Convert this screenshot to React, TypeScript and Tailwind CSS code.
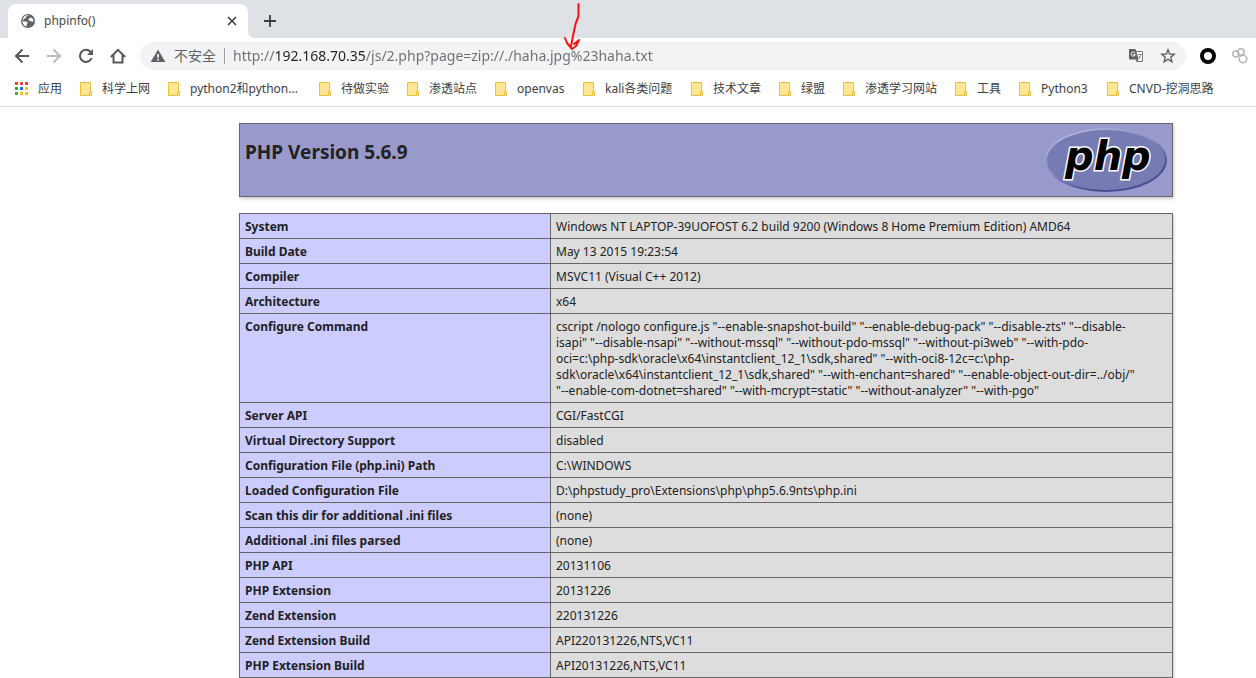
import React, { useState } from "react";

type Bookmark = {
  label: string;
  width: string;
};

const BOOKMARKS: Bookmark[] = [
  { label: "科学上网", width: "w-12" },
  { label: "python2和python...", width: "w-[111px]" },
  { label: "待做实验", width: "w-12" },
  { label: "渗透站点", width: "w-12" },
  { label: "openvas", width: "w-12" },
  { label: "kali各类问题", width: "w-[68px]" },
  { label: "技术文章", width: "w-12" },
  { label: "绿盟", width: "w-6" },
  { label: "渗透学习网站", width: "w-[72px]" },
  { label: "工具", width: "w-6" },
  { label: "Python3", width: "w-12" },
  { label: "CNVD-挖洞思路", width: "w-[90px]" },
];

const CONFIGURE_COMMAND = [
  'cscript /nologo configure.js "--enable-snapshot-build" "--enable-debug-pack" "--disable-zts" "--disable-',
  'isapi" "--disable-nsapi" "--without-mssql" "--without-pdo-mssql" "--without-pi3web" "--with-pdo-',
  'oci=c:\\php-sdk\\oracle\\x64\\instantclient_12_1\\sdk,shared" "--with-oci8-12c=c:\\php-',
  'sdk\\oracle\\x64\\instantclient_12_1\\sdk,shared" "--with-enchant=shared" "--enable-object-out-dir=../obj/"',
  '"--enable-com-dotnet=shared" "--with-mcrypt=static" "--without-analyzer" "--with-pgo"',
].join("\n");

const INFO: [string, string][] = [
  ["System", "Windows NT LAPTOP-39UOFOST 6.2 build 9200 (Windows 8 Home Premium Edition) AMD64"],
  ["Build Date", "May 13 2015 19:23:54"],
  ["Compiler", "MSVC11 (Visual C++ 2012)"],
  ["Architecture", "x64"],
  ["Configure Command", CONFIGURE_COMMAND],
  ["Server API", "CGI/FastCGI"],
  ["Virtual Directory Support", "disabled"],
  ["Configuration File (php.ini) Path", "C:\\WINDOWS"],
  ["Loaded Configuration File", "D:\\phpstudy_pro\\Extensions\\php\\php5.6.9nts\\php.ini"],
  ["Scan this dir for additional .ini files", "(none)"],
  ["Additional .ini files parsed", "(none)"],
  ["PHP API", "20131106"],
  ["PHP Extension", "20131226"],
  ["Zend Extension", "220131226"],
  ["Zend Extension Build", "API220131226,NTS,VC11"],
  ["PHP Extension Build", "API20131226,NTS,VC11"],
];

const APP_DOTS = [
  "#ea4335", "#ea4335", "#ea4335",
  "#34a853", "#1a73e8", "#fbbc04",
  "#34a853", "#fbbc04", "#fbbc04",
];

function GlobeIcon() {
  return (
    <svg viewBox="0 0 16 16" className="h-4 w-4">
      <circle cx="8" cy="8" r="7" fill="#5f6368" />
      <path
        d="M8.8 2.4 6.2 3.6 5.6 5 3.4 6.6 2.6 8.6 5 8.4 7 8.8 7.8 10 6.8 11 6.6 13.4A5.6 5.6 0 0 1 2.4 8L2.6 6.6A5.6 5.6 0 0 1 8.8 2.4ZM9 5.4 11 4.4 12.4 5.2A5.4 5.4 0 0 1 13.4 8.8L11.2 8.6 9.6 7.4 8 7.2Z"
        fill="#fff"
      />
    </svg>
  );
}

function FolderIcon() {
  return (
    <svg viewBox="0 0 16 16" className="h-4 w-4 shrink-0">
      <path d="M.5 1.5h10v8.5h1v4.5H.5z" fill="#ffe694" stroke="#e8c13f" />
      <path d="M9.5 14.5v-3.5l1-1" fill="none" stroke="#e8c13f" />
    </svg>
  );
}

function TranslateIcon() {
  return (
    <svg viewBox="0 0 16 16" className="h-4 w-4">
      <path d="M7 3.5h7.5v10H9" fill="#fff" stroke="#777b7f" />
      <path d="M1 1h6.5l3.2 10.5H2A1 1 0 0 1 1 10.5z" fill="#5f6368" />
      <path d="M7.5 11.5 9 14.5 10.5 11.5z" fill="#5f6368" />
      <path d="M6.8 4.8A2 2 0 1 0 7.2 6.4H5.4" fill="none" stroke="#fff" />
      <path d="M9.8 6.5h4M11.8 5.5v1M13 6.8q-.8 2.6-2.6 3.8M10.8 8q1 1.6 2.4 2.8" fill="none" stroke="#777b7f" strokeWidth=".8" />
    </svg>
  );
}

function PhpLogo() {
  return (
    <svg viewBox="0 0 122 67" className="h-[67px] w-[122px] shrink-0" role="img" aria-label="PHP logo">
      <defs>
        <linearGradient id="rim" x1="0.2" y1="0" x2="0.8" y2="1">
          <stop offset="0" stopColor="#b4b6dc" />
          <stop offset="0.45" stopColor="#8a8cc0" />
          <stop offset="0.8" stopColor="#484a92" />
        </linearGradient>
      </defs>
      <ellipse cx="61" cy="33" rx="61" ry="32" fill="url(#rim)" />
      <ellipse cx="61" cy="33" rx="59" ry="30" fill="#777bb3" />
      <text
        x="20"
        y="43"
        fontSize="40"
        fontWeight="700"
        fontStyle="italic"
        fontFamily="'DejaVu Sans', sans-serif"
        fill="#000"
        stroke="#fff"
        strokeWidth="3"
        paintOrder="stroke"
      >
        php
      </text>
    </svg>
  );
}

function TabStrip() {
  return (
    <div className="flex h-[38px] items-end bg-[#dee1e6] px-2">
      <div className="flex h-[34px] w-60 items-center rounded-t-lg bg-white pr-2 pl-3">
        <GlobeIcon />
        <span className="ml-2 flex-1 text-xs text-[#45494d]">phpinfo()</span>
        <button type="button" aria-label="Close tab" className="flex h-4 w-4 items-center justify-center">
          <svg viewBox="0 0 16 16" className="h-4 w-4" stroke="#3c4043" strokeWidth="1.6">
            <path d="M4 4l8 8M12 4l-8 8" />
          </svg>
        </button>
      </div>
      {/* flare where the tab meets the toolbar */}
      <svg viewBox="0 0 8 8" className="h-2 w-2" fill="#fff">
        <path d="M0 0Q0 8 8 8H0z" />
      </svg>
      <button type="button" aria-label="New tab" className="ml-[6px] flex h-[34px] w-4 items-center">
        <svg viewBox="0 0 16 16" className="h-4 w-4" stroke="#3c4043" strokeWidth="1.8">
          <path d="M8 2v12M2 8h12" />
        </svg>
      </button>
    </div>
  );
}

function Toolbar() {
  const [url, setUrl] = useState("http://192.168.70.35/js/2.php?page=zip://./haha.jpg%23haha.txt");

  return (
    <div className="flex h-9 items-center pr-2 pl-[14px]">
      <div className="flex gap-4">
        <button type="button" aria-label="Back">
          <svg viewBox="0 0 16 16" className="h-4 w-4" fill="none" stroke="#54585c" strokeWidth="2">
            <path d="M15 8H2.5M8.5 1.5 2 8l6.5 6.5" />
          </svg>
        </button>
        <button type="button" aria-label="Forward">
          <svg viewBox="0 0 16 16" className="h-4 w-4" fill="none" stroke="#babcbe" strokeWidth="2">
            <path d="M1 8h12.5M7.5 1.5 14 8l-6.5 6.5" />
          </svg>
        </button>
        <button type="button" aria-label="Reload">
          <svg viewBox="0 0 16 16" className="h-4 w-4" fill="none" stroke="#54585c" strokeWidth="2">
            <path d="M13.6 10A6 6 0 1 1 12.4 3.8L14 5.5" />
            <path d="M15 1v6H9z" fill="#54585c" stroke="none" />
          </svg>
        </button>
        <button type="button" aria-label="Home">
          <svg viewBox="0 0 16 16" className="h-4 w-4" fill="none" stroke="#54585c" strokeWidth="2">
            <path d="M.8 9 8 1.8 15.2 9M3.5 7v7.5h9V7" />
          </svg>
        </button>
      </div>
      <div className="ml-[14px] flex h-7 flex-1 items-center rounded-full bg-[#f1f3f4] px-[10px]">
        <svg viewBox="0 0 16 16" className="h-4 w-4">
          <path d="M8 1.5 15.3 14H.7z" fill="#5f6368" />
          <path d="M8 6v3.8M8 10.8v1.6" stroke="#fff" strokeWidth="1.6" />
        </svg>
        <span className="ml-2 text-sm text-[#5f6368]">不安全</span>
        <span className="mx-2 h-4 w-px bg-[#9aa0a6]" />
        <input
          type="text"
          aria-label="Address"
          value={url}
          onChange={(e) => setUrl(e.target.value)}
          className="min-w-0 flex-1 bg-[linear-gradient(to_right,#6b6f73_43px,#202124_43px,#202124_132px,#6b6f73_132px)] bg-clip-text text-sm text-transparent caret-black outline-none"
        />
        <button type="button" aria-label="Translate">
          <TranslateIcon />
        </button>
        <button type="button" aria-label="Bookmark this page" className="ml-4">
          <svg viewBox="0 0 16 16" className="h-4 w-4" fill="none" stroke="#5f6368" strokeWidth="1.4">
            <path d="M8 1.8 9.7 6l4.5.3-3.4 2.9 1.1 4.5L8 11.3l-3.9 2.4 1.1-4.5L1.8 6.3 6.3 6z" />
          </svg>
        </button>
      </div>
      <div className="ml-[14px] flex gap-4">
        <button type="button" aria-label="Extension">
          <svg viewBox="0 0 16 16" className="h-4 w-4">
            <circle cx="8" cy="8" r="6" fill="none" stroke="#000" strokeWidth="4" />
          </svg>
        </button>
        <button type="button" aria-label="Link extension">
          <svg viewBox="0 0 16 16" className="h-4 w-4" fill="none" stroke="#b5b5b5" strokeWidth="1.5">
            <circle cx="3.8" cy="6" r="3" />
            <circle cx="9" cy="4" r="3.2" />
            <circle cx="11" cy="11" r="3.8" />
          </svg>
        </button>
      </div>
    </div>
  );
}

function BookmarksBar() {
  return (
    <nav className="flex h-[33px] items-center gap-[18px] overflow-hidden border-b border-[#dadce0] pb-[2px] pl-[14px] text-xs whitespace-nowrap text-[#3c4043]">
      <a href="#apps" className="flex items-center gap-2">
        <svg viewBox="0 0 16 16" className="h-4 w-4">
          {APP_DOTS.map((color, i) => (
            <rect key={i} x={1 + (i % 3) * 5} y={1 + Math.floor(i / 3) * 5} width="3" height="3" fill={color} />
          ))}
        </svg>
        <span className="w-6">应用</span>
      </a>
      {BOOKMARKS.map((b) => (
        <a key={b.label} href="#bookmark" className="flex items-center gap-[6px]">
          <FolderIcon />
          <span className={b.width}>{b.label}</span>
        </a>
      ))}
    </nav>
  );
}

export default function App() {
  return (
    <div className="relative bg-white font-['Noto_Sans','Noto_Sans_CJK_SC',sans-serif]">
      <TabStrip />
      <Toolbar />
      <BookmarksBar />

      <main className="pt-4 pr-[83px] pl-[239px] text-[#222]">
        <header className="flex h-[74px] items-start justify-between border border-[#666] bg-[#9999cc] px-[5px] py-[3px] shadow-[1px_2px_3px_#ccc]">
          <h1 className="pt-[13px] text-[19px] leading-6 font-bold">PHP Version 5.6.9</h1>
          <PhpLogo />
        </header>

        <table className="mt-4 w-full table-fixed border-collapse text-left text-xs leading-4 shadow-[1px_2px_3px_#ccc]">
          <tbody>
            {INFO.map(([name, value]) => (
              <tr key={name}>
                <th scope="row" className="w-[311px] border border-[#666] bg-[#ccccff] px-[5px] pt-[5px] pb-[3px] align-top font-bold">
                  {name}
                </th>
                <td className="border border-[#666] bg-[#dddddd] px-[5px] pt-[5px] pb-[3px] align-top break-words whitespace-pre-line">
                  {value}
                </td>
              </tr>
            ))}
          </tbody>
        </table>
      </main>

      {/* hand-drawn arrow over the address bar */}
      <svg
        viewBox="0 0 20 50"
        className="pointer-events-none absolute top-[2px] left-[563px] h-[50px] w-5"
        fill="none"
        stroke="#ff1010"
        strokeWidth="2"
        strokeLinecap="round"
        strokeLinejoin="round"
      >
        <path d="M15.500 2 15.500 14Q12 22 11 29L8 44M2 36 4 41 9 47 13 44 16 38 11 42" />
      </svg>
    </div>
  );
}
